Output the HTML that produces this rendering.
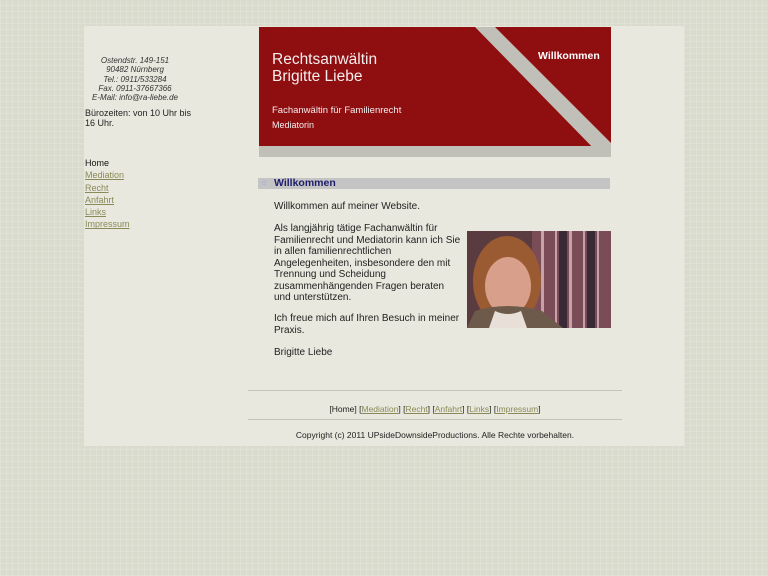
<!DOCTYPE html>
<html><head><meta charset="utf-8"><style>
html,body{margin:0;padding:0;width:768px;height:576px;overflow:hidden}
body{background-color:#d9dbcc;background-image:repeating-linear-gradient(90deg,rgba(255,255,255,.18) 0 1px,transparent 1px 6px),repeating-linear-gradient(0deg,rgba(255,255,255,.18) 0 1px,transparent 1px 6px);font-family:"Liberation Sans",sans-serif;color:#222;position:relative}
.box{position:absolute;left:84px;top:26px;width:600px;height:420px;background:#e8e8de}
.a{position:absolute;white-space:nowrap}
.addr{left:84px;width:102px;top:56px;font-size:8px;font-style:italic;text-align:center;line-height:9.3px;color:#333}
.nav{left:85px;top:157px;font-size:9px;line-height:12.3px}
.nav a{color:#8a8a58;text-decoration:underline;display:block}
.nav span{display:block;color:#111}
.p{left:274px;font-size:10px;line-height:11.5px;color:#222}
.foot{font-size:8.5px;left:248px;width:374px;text-align:center}
.foot a{color:#8a8a58;text-decoration:underline}
.hr{position:absolute;left:248px;width:374px;height:1px;background:#c4c4bc}
</style></head><body>
<div class="box"></div>
<div class="a addr">Ostendstr. 149-151<br>90482 Nürnberg<br>Tel.: 0911/533284<br>Fax. 0911-37667366<br>E-Mail: info@ra-liebe.de</div>
<div class="a" style="left:85px;top:108px;font-size:9px;line-height:10px">Bürozeiten: von 10 Uhr bis<br>16 Uhr.</div>
<div class="a nav"><span>Home</span><a>Mediation</a><a>Recht</a><a>Anfahrt</a><a>Links</a><a>Impressum</a></div>
<svg class="a" style="left:259px;top:27px" width="352" height="130">
<rect width="352" height="130" fill="#c1c0b8"/>
<rect width="352" height="119" fill="#8f0e10"/>
<polygon points="216,0 236,0 352,116 352,130 343,130 " fill="#c1c0b8"/>
<text x="13" y="37" fill="#f4eeee" font-family="Liberation Sans" font-size="15.5">Rechtsanwältin</text>
<text x="13" y="54" fill="#f4eeee" font-family="Liberation Sans" font-size="15.5">Brigitte Liebe</text>
<text x="13" y="86" fill="#f4eeee" font-family="Liberation Sans" font-size="9.5">Fachanwältin für Familienrecht</text>
<text x="13" y="101" fill="#f4eeee" font-family="Liberation Sans" font-size="9">Mediatorin</text>
<text x="279" y="32" fill="#fff" font-family="Liberation Sans" font-size="10.5" font-weight="bold">Willkommen</text>
</svg>
<div class="a" style="left:258px;top:178px;width:352px;height:11px;background:#c4c4c4"></div>
<div class="a" style="left:260px;top:177px;font-size:9px;color:#9aa0e0">☼</div>
<div class="a" style="left:274px;top:177px;font-size:10.5px;font-weight:bold;color:#1c1c6a">Willkommen</div>
<div class="a p" style="top:201px">Willkommen auf meiner Website.</div>
<div class="a p" style="top:223px">Als langjährig tätige Fachanwältin für<br>Familienrecht und Mediatorin kann ich Sie<br>in allen familienrechtlichen<br>Angelegenheiten, insbesondere den mit<br>Trennung und Scheidung<br>zusammenhängenden Fragen beraten<br>und unterstützen.</div>
<div class="a p" style="top:313px">Ich freue mich auf Ihren Besuch in meiner<br>Praxis.</div>
<div class="a p" style="top:347px">Brigitte Liebe</div>
<svg class="a" style="left:467px;top:231px" width="144" height="97">
<rect width="144" height="97" fill="#5a3c40"/>
<rect x="65" width="79" height="97" fill="#7a4c58"/>
<g fill="#c8a0a8"><rect x="74" width="3" height="97"/><rect x="88" width="2" height="97"/><rect x="102" width="3" height="97"/><rect x="116" width="2" height="97"/><rect x="130" width="2" height="97"/></g>
<g fill="#3a2a36"><rect x="92" width="8" height="97"/><rect x="120" width="8" height="97"/></g>
<ellipse cx="40" cy="50" rx="34" ry="45" fill="#9a5a32"/>
<ellipse cx="41" cy="55" rx="23" ry="29" fill="#d8a08a"/>
<path d="M0 97 L8 80 Q40 70 75 80 L96 97Z" fill="#6e5a4a"/>
<path d="M22 97 L28 80 Q41 86 54 80 L60 97Z" fill="#e8e0d8"/>
</svg>
<div class="hr" style="top:390px"></div>
<div class="a foot" style="top:404px">[Home] [<a>Mediation</a>] [<a>Recht</a>] [<a>Anfahrt</a>] [<a>Links</a>] [<a>Impressum</a>]</div>
<div class="hr" style="top:419px"></div>
<div class="a foot" style="top:430px">Copyright (c) 2011 UPsideDownsideProductions. Alle Rechte vorbehalten.</div>
</body></html>
